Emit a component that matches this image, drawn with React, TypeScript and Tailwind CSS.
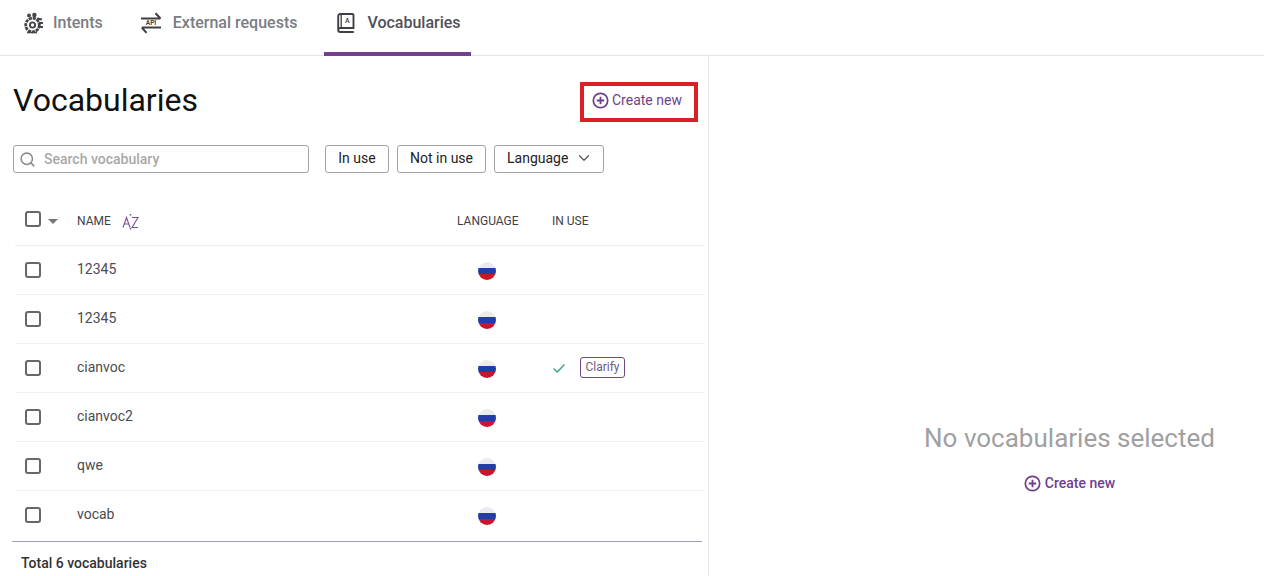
import { ChevronDown, Search } from "lucide-react"

const rows = [
  { name: "12345" },
  { name: "12345" },
  { name: "cianvoc", clarify: true },
  { name: "cianvoc2" },
  { name: "qwe" },
  { name: "vocab" },
]

function PlusCircle() {
  return (
    <svg width="17" height="17" viewBox="0 0 17 17" fill="none" stroke="#6f3f8c" className="shrink-0">
      <circle cx="8.5" cy="8.5" r="7.2" strokeWidth="1.7" />
      <path d="M8.5 4.8v7.4M4.8 8.5h7.4" strokeWidth="1.8" />
    </svg>
  )
}

function IntentsIcon() {
  return (
    <svg width="20" height="22" viewBox="0 0 20 22" fill="none" className="shrink-0">
      <circle cx="9.5" cy="13" r="6.8" stroke="#45454a" strokeWidth="2.8" strokeDasharray="3.2 0.8" />
      <circle cx="9.5" cy="13" r="2.6" stroke="#45454a" strokeWidth="1.9" />
      <circle cx="6" cy="3.4" r="1.9" fill="#45454a" />
      <circle cx="11.4" cy="3" r="2.2" fill="#45454a" />
      <path d="M14 6.5l5 1M16 11h4M16 15h4" stroke="#45454a" strokeWidth="1.8" />
      <path d="M4 20.5h10" stroke="#45454a" strokeWidth="1.6" />
    </svg>
  )
}

function ApiIcon() {
  return (
    <svg width="22" height="22" viewBox="0 0 22 22" fill="none" className="shrink-0">
      <path d="M1 6.5h19.5M15.5 1.2l5 5.3" stroke="#3f3f44" strokeWidth="2" />
      <path d="M21 15.5H1.8M6.5 20.8L1.8 15.5" stroke="#3f3f44" strokeWidth="2" />
      <text x="11" y="13.2" textAnchor="middle" fontSize="6.5" fontWeight="700" fill="#3f3f44" fontFamily="Roboto, sans-serif">
        API
      </text>
    </svg>
  )
}

function BookIcon() {
  return (
    <svg width="18" height="20" viewBox="0 0 18 20" fill="none" className="shrink-0">
      <path
        d="M1.2 16.5V3a2 2 0 0 1 2-2h12a1.3 1.3 0 0 1 1.3 1.3V15H3.2a2 2 0 0 0-2 2 2 2 0 0 0 2 2h13.6"
        stroke="#3f3f46"
        strokeWidth="1.9"
      />
      <path d="M4.2 1.5v13" stroke="#3f3f46" strokeWidth="1.3" />
      <text x="10.4" y="9.6" textAnchor="middle" fontSize="7" fontWeight="500" fill="#3f3f46" fontFamily="Roboto, sans-serif">
        A
      </text>
    </svg>
  )
}

function AzIcon() {
  return (
    <svg width="17" height="17" viewBox="0 0 17 17" fill="none" stroke="#7c4f9c" strokeWidth="1.1" className="shrink-0">
      <path d="M1 14.5L4.5 4.5L8 14.5M2.2 11h4.6" />
      <path d="M10 4.5h6L10 14.5h6" />
      <path d="M8.5 1v1.5M8.5 15v1.5" strokeWidth="1.5" />
    </svg>
  )
}

function RuFlag() {
  return (
    <div className="flex h-[18px] w-[18px] flex-col overflow-hidden rounded-full">
      <div className="h-[6px] bg-[#e9ebef]" />
      <div className="h-[6px] bg-[#1f3fa8]" />
      <div className="h-[6px] bg-[#c8162e]" />
    </div>
  )
}

function Checkbox() {
  return <div className="h-4 w-4 rounded-[3px] border-2 border-[#66666b] bg-white" />
}

function Tab(props: { label: string; icon: React.ReactNode; active?: boolean; className: string }) {
  return (
    <div
      className={
        "flex h-[56px] items-center border-b-4 pb-[6px] " +
        (props.active ? "border-[#73408f] " : "border-transparent ") +
        props.className
      }
    >
      {props.icon}
      <span className={"text-base font-medium " + (props.active ? "text-[#50505a]" : "text-[#7a7d83]")}>{props.label}</span>
    </div>
  )
}

function FilterButton(props: { label: string; className?: string; children?: React.ReactNode }) {
  return (
    <button
      className={
        "flex h-7 items-center rounded-[3px] border border-[#a3a3a3] bg-white pb-[2px] text-sm font-[450] text-[#222] " +
        (props.className ?? "")
      }
    >
      {props.label}
      {props.children}
    </button>
  )
}

export default function App() {
  return (
    <div className="h-[576px] w-[1264px] overflow-hidden bg-white font-['Roboto',sans-serif]">
      <nav className="relative flex h-[56px] border-b border-[#e4e4e4]">
        <Tab label="Intents" icon={<IntentsIcon />} className="ml-[23px] gap-[10px]" />
        <Tab label="External requests" icon={<ApiIcon />} className="ml-[37px] gap-[11px]" />
        <Tab label="Vocabularies" icon={<BookIcon />} active className="ml-[27px] w-[147px] gap-[12px] pl-[13px]" />
      </nav>

      <div className="flex h-[520px]">
        <section className="w-[709px] border-r border-[#e4e4e4]">
          <div className="flex h-[89px] items-start justify-between pl-[13px] pr-[10px] pt-[26px]">
            <h1 className="text-[32px] leading-[37px] text-[#111]">Vocabularies</h1>
            <button className="flex h-10 w-[118px] items-center gap-[3px] border-4 border-[#dc1f26] pb-[4px] pl-[8px] text-sm font-[450] text-[#6f3f8c]">
              <PlusCircle />
              Create new
            </button>
          </div>

          <div className="flex items-center pl-[13px]">
            <div className="flex h-7 w-[296px] items-center gap-[8px] rounded-[3px] border border-[#a3a3a3] pl-[5px]">
              <Search size={17} strokeWidth={2.2} className="text-[#8a8a8a]" />
              <span className="text-sm font-medium text-[#a8a8a8]">Search vocabulary</span>
            </div>
            <div className="ml-4 flex gap-2">
              <FilterButton label="In use" className="w-16 justify-center" />
              <FilterButton label="Not in use" className="w-[89px] justify-center" />
              <FilterButton label="Language" className="w-[110px] pl-[12px]">
                <ChevronDown size={18} strokeWidth={1.6} className="ml-[7px] text-[#555]" />
              </FilterButton>
            </div>
          </div>

          <div className="ml-[15px] mt-6 w-[689px]">
            <div className="flex h-[49px] items-center border-b border-[#ececec] text-xs font-[450] text-[#3f3f46]">
              <div className="ml-[10px] flex w-[52px] items-center">
                <div className="mb-[4px]">
                  <Checkbox />
                </div>
                <span className="ml-[7px] h-0 w-0 border-x-[5px] border-t-[5px] border-x-transparent border-t-[#777]" />
              </div>
              <div className="flex w-[380px] items-center gap-[11px]">
                NAME
                <AzIcon />
              </div>
              <div className="w-[95px]">LANGUAGE</div>
              <div>IN USE</div>
            </div>
            {rows.map((row, i) => (
              <div key={i} className="flex h-[49px] items-center border-b border-[#f0f0f0] text-sm font-[450] text-[#4b4b52] last:border-transparent">
                <div className="ml-[10px] w-[52px]">
                  <Checkbox />
                </div>
                <div className="w-[401px] pb-[2px]">{row.name}</div>
                <div className="w-[74px] pt-[1px]">
                  <RuFlag />
                </div>
                {row.clarify && (
                  <div className="flex items-center">
                    <svg width="14" height="14" viewBox="0 0 14 14" fill="none" stroke="#2fae78" strokeWidth="1.4">
                      <path d="M1.5 7.5L5.2 11L12.5 3.5" />
                    </svg>
                    <span className="mb-[2px] ml-[14px] flex h-[21px] w-[45px] items-center justify-center rounded-[3px] border border-[#6f4a8a] text-xs font-normal text-[#6f5a85]">
                      Clarify
                    </span>
                  </div>
                )}
              </div>
            ))}
          </div>
          <div className="ml-[12px] mt-[1px] w-[690px] border-t border-[#a79bb0] pl-[9px] pt-[11px] text-sm font-[480] text-[#333]">
            Total 6 vocabularies
          </div>
        </section>

        <section className="flex flex-1 flex-col items-center pl-[166px] pt-[366px]">
          <div className="text-[26px] leading-[32px] text-[#a0a0a0]">No vocabularies selected</div>
          <button className="mt-[19px] flex items-center gap-[4px] text-sm font-medium text-[#6f3f8c]">
            <PlusCircle />
            Create new
          </button>
        </section>
      </div>
    </div>
  )
}
